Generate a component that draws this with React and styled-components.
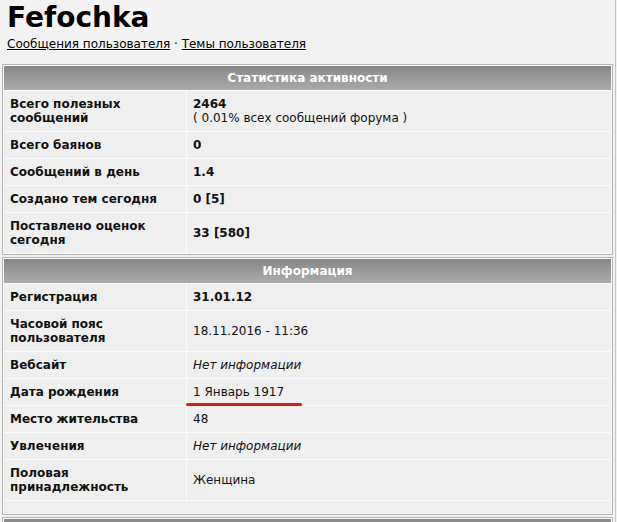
import React from 'react'
import styled, { createGlobalStyle } from 'styled-components'

const GlobalStyle = createGlobalStyle`
  html, body { margin:0; padding:0; background:#f3f3f3; }
  body { font-family: "DejaVu Sans", Verdana, sans-serif; color:#111; }
`

const Page = styled.div`
  box-sizing:border-box;
  width:616px;
  min-height:522px;
  border-right:1px solid #c4c4c4;
  padding:0 0 0 2px;
  overflow:hidden;
`
const UserName = styled.h1`
  margin:0;
  padding:2px 0 0 5px;
  font-size:28px;
  line-height:32px;
  font-weight:bold;
  color:#000;
`
const Links = styled.div`
  padding:2px 0 0 5px;
  font-size:12px;
  line-height:16px;
  color:#000;
  a { color:#000; text-decoration:underline; }
`
const Panel = styled.div`
  margin:${p => p.$top}px 0 0 0;
  width:611px;
  box-sizing:border-box;
  border:1px solid #b3b3b3;
  padding:1px;
  background:#fbfbfb;
  padding-bottom:${p => p.$extra}px;
`
const Header = styled.div`
  height:24px;
  line-height:24px;
  text-align:center;
  color:#fff;
  font-weight:bold;
  font-size:12px;
  background:linear-gradient(#878787, #ababab);
  border-bottom:1px solid #fbfbfb;
`
const Grid = styled.div`
  display:grid;
  grid-template-columns:182px 1fr;
  gap:1px;
  background:#fbfbfb;
`
const Label = styled.div`
  background:#efefef;
  padding:6px 6px;
  font-size:12px;
  line-height:14px;
  font-weight:bold;
  display:flex;
  align-items:center;
`
const Value = styled.div`
  background:#efefef;
  padding:6px 6px;
  font-size:12px;
  line-height:14px;
  font-weight:${p => (p.$bold ? 'bold' : 'normal')};
  font-style:${p => (p.$italic ? 'italic' : 'normal')};
  display:flex;
  flex-direction:column;
  justify-content:center;
  color:#111;
`
const Note = styled.span`
  font-weight:normal;
`
const Marked = styled.span`
  position:relative;
  &::after {
    content:'';
    position:absolute;
    left:-7px;
    right:-18px;
    bottom:-7px;
    height:3px;
    border-radius:2px;
    background:#e3141b;
  }
`
const Filler = styled.div`
  background:#efefef;
  height:12px;
  margin-top:1px;
`

const stats = [
  { label: 'Всего полезных сообщений', value: '2464', note: '( 0.01% всех сообщений форума )' },
  { label: 'Всего баянов', value: '0' },
  { label: 'Сообщений в день', value: '1.4' },
  { label: 'Создано тем сегодня', value: '0 [5]' },
  { label: 'Поставлено оценок сегодня', value: '33 [580]' },
]

const info = [
  { label: 'Регистрация', value: '31.01.12', bold: true },
  { label: 'Часовой пояс пользователя', value: '18.11.2016 - 11:36' },
  { label: 'Вебсайт', value: 'Нет информации', italic: true },
  { label: 'Дата рождения', value: '1 Январь 1917', marked: true },
  { label: 'Место жительства', value: '48' },
  { label: 'Увлечения', value: 'Нет информации', italic: true },
  { label: 'Половая принадлежность', value: 'Женщина' },
]

const App = () => (
  <>
    <GlobalStyle />
    <Page>
      <UserName>Fefochka</UserName>
      <Links>
        <a href="#">Сообщения пользователя</a> · <a href="#">Темы пользователя</a>
      </Links>

      <Panel $top={12} $extra={1}>
        <Header>Статистика активности</Header>
        <Grid>
          {stats.map(s => (
            <React.Fragment key={s.label}>
              <Label>{s.label}</Label>
              <Value $bold>
                <div>{s.value}</div>
                {s.note && <Note>{s.note}</Note>}
              </Value>
            </React.Fragment>
          ))}
        </Grid>
      </Panel>

      <Panel $top={2} $extra={1}>
        <Header>Информация</Header>
        <Grid>
          {info.map(s => (
            <React.Fragment key={s.label}>
              <Label>{s.label}</Label>
              <Value $bold={s.bold} $italic={s.italic}>
                <div>{s.marked ? <Marked>{s.value}</Marked> : s.value}</div>
              </Value>
            </React.Fragment>
          ))}
        </Grid>
        <Filler />
      </Panel>

      <Panel $top={2} $extra={1}>
        <Header />
      </Panel>
    </Page>
  </>
)

export default App
